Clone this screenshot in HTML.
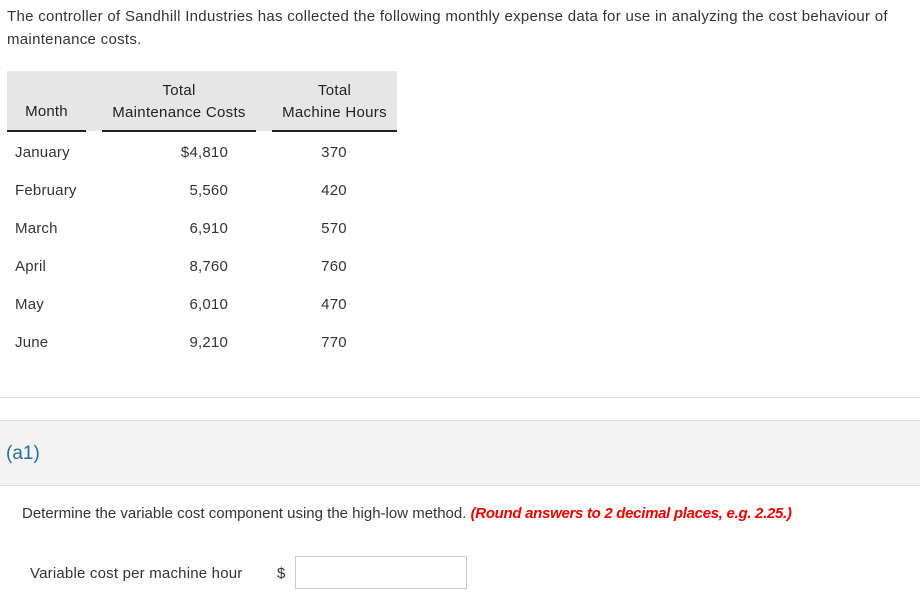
<!DOCTYPE html>
<html><head><style>
body{margin:0;width:920px;height:616px;background:#fff;font-family:"Liberation Sans",sans-serif;color:#333;position:relative;overflow:hidden}
.a{position:absolute;white-space:nowrap}
.t{font-size:15px;letter-spacing:0.2px}
</style></head><body>
<div class="a t" style="left:7px;top:8px;letter-spacing:0.3px">The controller of Sandhill Industries has collected the following monthly expense data for use in analyzing the cost behaviour of</div>
<div class="a t" style="left:7px;top:31px;letter-spacing:0.3px">maintenance costs.</div>

<div class="a" style="left:7px;top:71px;width:390px;height:60px;background:#e6e6e6"></div>
<div class="a" style="left:7px;top:130px;width:79px;height:2px;background:#222"></div>
<div class="a" style="left:102px;top:130px;width:154px;height:2px;background:#222"></div>
<div class="a" style="left:272px;top:130px;width:125px;height:2px;background:#222"></div>
<div class="a t" style="left:7px;width:79px;top:103px;text-align:center;color:#222">Month</div>
<div class="a t" style="left:102px;width:154px;top:80px;text-align:center;color:#222;line-height:22px;letter-spacing:0.3px">Total<br>Maintenance Costs</div>
<div class="a t" style="left:272px;width:125px;top:80px;text-align:center;color:#222;line-height:22px;letter-spacing:0.3px">Total<br>Machine Hours</div>

<div class="a t" style="left:15px;top:134px;line-height:38px">January<br>February<br>March<br>April<br>May<br>June</div>
<div class="a t" style="left:150px;width:78px;top:134px;line-height:38px;text-align:right">$4,810<br>5,560<br>6,910<br>8,760<br>6,010<br>9,210</div>
<div class="a t" style="left:300px;width:68px;top:134px;line-height:38px;text-align:center">370<br>420<br>570<br>760<br>470<br>770</div>

<div class="a" style="left:0;top:397px;width:920px;height:1px;background:#ddd"></div>
<div class="a" style="left:0;top:420px;width:920px;height:64px;background:#f3f3f3;border-top:1px solid #ddd;border-bottom:1px solid #ddd"></div>
<div class="a" style="left:6px;top:443px;font-size:19px;color:#2a6d9c">(a1)</div>

<div class="a t" style="left:22px;top:505px;letter-spacing:0">Determine the variable cost component using the high-low method. <b style="color:#e00;font-style:italic;letter-spacing:-0.3px">(Round answers to 2 decimal places, e.g. 2.25.)</b></div>
<div class="a t" style="left:30px;top:565px">Variable cost per machine hour</div>
<div class="a t" style="left:277px;top:565px">$</div>
<div class="a" style="left:295px;top:556px;width:170px;height:31px;border:1px solid #ccc;background:#fff"></div>
</body></html>
